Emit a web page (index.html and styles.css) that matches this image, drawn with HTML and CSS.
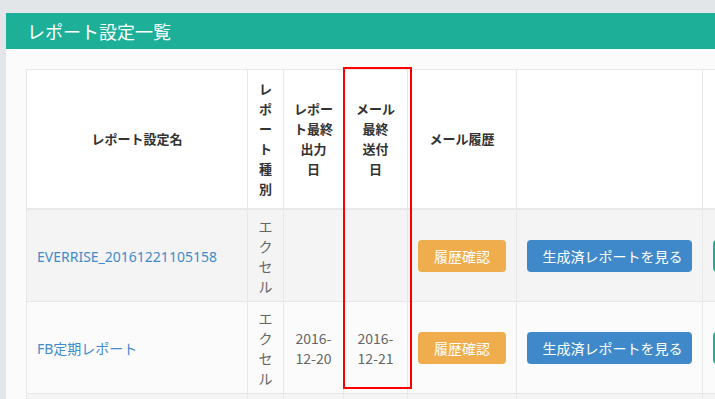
FILE: index.html
```html
<!DOCTYPE html>
<html>
<head>
    <meta charset="utf-8">
    <title>レポート設定一覧</title>
    <link rel="stylesheet" href="styles.css">
</head>
<body>
    <div class="page">
        <div class="panel">
            <div class="panel-heading">レポート設定一覧</div>
            <div class="panel-body">
                <div class="table-wrap">
                    <table class="report-table">
                        <colgroup>
                            <col class="c-name">
                            <col class="c-type">
                            <col class="c-out">
                            <col class="c-mail">
                            <col class="c-hist">
                            <col class="c-view">
                            <col class="c-edit">
                        </colgroup>
                        <thead>
                            <tr>
                                <th>レポート設定名</th>
                                <th>レ<br>ポ<br>ー<br>ト<br>種<br>別</th>
                                <th>レポー<br>ト最終<br>出力<br>日</th>
                                <th>メール<br>最終<br>送付<br>日</th>
                                <th>メール履歴</th>
                                <th></th>
                                <th></th>
                            </tr>
                        </thead>
                        <tbody>
                            <tr class="odd">
                                <td><a href="#">EVERRISE_20161221105158</a></td>
                                <td class="narrow">エ<br>ク<br>セ<br>ル</td>
                                <td class="center"></td>
                                <td class="center"></td>
                                <td><span class="btn btn-warning">履歴確認</span></td>
                                <td><span class="btn btn-primary">生成済レポートを見る</span></td>
                                <td><span class="btn btn-success"></span></td>
                            </tr>
                            <tr>
                                <td><a href="#">FB定期レポート</a></td>
                                <td class="narrow">エ<br>ク<br>セ<br>ル</td>
                                <td class="center">2016-<br>12-20</td>
                                <td class="center">2016-<br>12-21</td>
                                <td><span class="btn btn-warning">履歴確認</span></td>
                                <td><span class="btn btn-primary">生成済レポートを見る</span></td>
                                <td><span class="btn btn-success"></span></td>
                            </tr>
                            <tr class="odd spacer">
                                <td></td>
                                <td></td>
                                <td></td>
                                <td></td>
                                <td></td>
                                <td></td>
                                <td></td>
                            </tr>
                        </tbody>
                    </table>
                    <div class="highlight"></div>
                </div>
            </div>
        </div>
    </div>
</body>
</html>
```

FILE: styles.css
```css
html, body { margin: 0; padding: 0; overflow: hidden; }
body { background: #e3e6e9; font-family: "Noto Sans", "Noto Sans CJK JP", sans-serif; font-size: 14px; line-height: 20px; color: #666; }
.page { padding: 13px 0 0 6px; }
.panel { width: 900px; background: #fbfbfb; }
.panel-heading { background: #1eaf98; color: #fff; font-size: 18px; height: 36px; line-height: 36px; padding-left: 21px; font-family: "Noto Sans CJK JP", sans-serif; }
.panel-body { padding: 20px 0 0 20px; }
.table-wrap { position: relative; }

.report-table { border-collapse: collapse; table-layout: fixed; width: 816px; font-family: "Noto Sans CJK JP", sans-serif; }
.c-name { width: 221px; }
.c-type { width: 36px; }
.c-out { width: 60px; }
.c-mail { width: 64px; }
.c-hist { width: 109px; }
.c-view { width: 186px; }
.c-edit { width: 140px; }

.report-table th, .report-table td { border: 1px solid #e8e8e8; padding: 6px 10px 5px; vertical-align: middle; }
.report-table th { background: #fff; color: #333; font-weight: bold; font-size: 13px; text-align: center; padding: 9px 4px; border-bottom: 2px solid #e8e8e8; }
.report-table tbody tr.odd td { background: #f4f4f4; }
.report-table tr.spacer td { height: 80px; }
.report-table td.narrow, .report-table td.center { text-align: center; padding-left: 4px; padding-right: 4px; }
.report-table a { color: #428bca; text-decoration: none; font-family: "Noto Sans", "Noto Sans CJK JP", sans-serif; }

.btn { display: inline-block; height: 32px; line-height: 32px; border-radius: 4px; color: #fff; text-align: center; font-size: 14px; box-sizing: border-box; vertical-align: middle; }
.btn-warning { background: #f0ad4e; width: 88px; }
.btn-primary { background: #3f89ca; width: 165px; padding-left: 6px; }
.btn-success { background: #1eaf98; width: 60px; }

.highlight { position: absolute; left: 317px; top: -2px; width: 69px; height: 322px; border: 2px solid #ff0000; box-sizing: border-box; }
```
